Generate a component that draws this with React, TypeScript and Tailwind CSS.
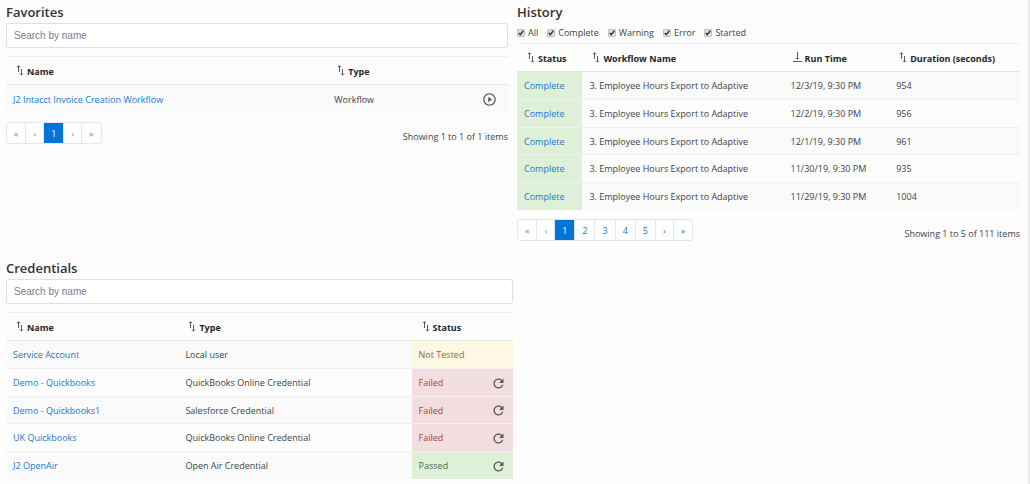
import { ReactNode, useState } from "react";
import clsx from "clsx";
import { MdPlayCircleOutline, MdRefresh } from "react-icons/md";

type HistoryItem = {
  workflow: string;
  runTime: string;
  duration: number;
};

type CredentialStatus = "Not Tested" | "Failed" | "Passed";

type Credential = {
  name: string;
  type: string;
  status: CredentialStatus;
};

const filters = ["All", "Complete", "Warning", "Error", "Started"];

const historyItems: HistoryItem[] = [
  { workflow: "3. Employee Hours Export to Adaptive", runTime: "12/3/19, 9:30 PM", duration: 954 },
  { workflow: "3. Employee Hours Export to Adaptive", runTime: "12/2/19, 9:30 PM", duration: 956 },
  { workflow: "3. Employee Hours Export to Adaptive", runTime: "12/1/19, 9:30 PM", duration: 961 },
  { workflow: "3. Employee Hours Export to Adaptive", runTime: "11/30/19, 9:30 PM", duration: 935 },
  { workflow: "3. Employee Hours Export to Adaptive", runTime: "11/29/19, 9:30 PM", duration: 1004 },
];

const credentials: Credential[] = [
  { name: "Service Account", type: "Local user", status: "Not Tested" },
  { name: "Demo - Quickbooks", type: "QuickBooks Online Credential", status: "Failed" },
  { name: "Demo - Quickbooks1", type: "Salesforce Credential", status: "Failed" },
  { name: "UK Quickbooks", type: "QuickBooks Online Credential", status: "Failed" },
  { name: "J2 OpenAir", type: "Open Air Credential", status: "Passed" },
];

const statusStyles: Record<CredentialStatus, string> = {
  "Not Tested": "bg-[#fcf8e3] text-[#8a6d3b]",
  Failed: "bg-[#f2dede] text-[#a94442]",
  Passed: "bg-[#dff0d8] text-[#47704a]",
};

export default function App() {
  return (
    <main className="grid min-h-screen grid-cols-[507fr_503fr] gap-x-1 border-r-2 border-[#ececec] bg-[#fdfdfd] pr-2 pl-[6px] font-['Open_Sans','Noto_Sans',sans-serif] text-[9px] leading-[14px] text-[#404346]">
      <div>
        <Favorites />
        <Credentials />
      </div>
      <History />
    </main>
  );
}

function Favorites() {
  return (
    <section className="h-64 pr-[5px]">
      <Heading>Favorites</Heading>
      <SearchInput label="Search favorites" />
      <Table className="mt-2">
        <colgroup>
          <col className="w-[64%]" />
          <col className="w-[29%]" />
          <col />
        </colgroup>
        <thead>
          <HeadRow>
            <HeadCell>Name</HeadCell>
            <HeadCell>Type</HeadCell>
            <td></td>
          </HeadRow>
        </thead>
        <tbody>
          <Row>
            <Cell>
              <Link>J2 Intacct Invoice Creation Workflow</Link>
            </Cell>
            <Cell>Workflow</Cell>
            <Cell>
              <button type="button" aria-label="Run workflow" className="ml-auto mr-1 block text-[#55595c]">
                <MdPlayCircleOutline className="size-[15px]" />
              </button>
            </Cell>
          </Row>
        </tbody>
      </Table>
      <Footer pages={[1]} summary="Showing 1 to 1 of 1 items" />
    </section>
  );
}

function Credentials() {
  return (
    <section>
      <Heading>Credentials</Heading>
      <SearchInput label="Search credentials" />
      <Table className="mt-2">
        <colgroup>
          <col className="w-[34%]" />
          <col className="w-[46%]" />
          <col />
        </colgroup>
        <thead>
          <HeadRow>
            <HeadCell>Name</HeadCell>
            <HeadCell>Type</HeadCell>
            <HeadCell>Status</HeadCell>
          </HeadRow>
        </thead>
        <tbody>
          {credentials.map((credential) => (
            <Row key={credential.name}>
              <Cell>
                <Link>{credential.name}</Link>
              </Cell>
              <Cell>{credential.type}</Cell>
              <Cell className={statusStyles[credential.status]}>
                <div className="flex items-center justify-between">
                  {credential.status}
                  {credential.status !== "Not Tested" && (
                    <button type="button" aria-label={`Retest ${credential.name}`} className="text-[#55595c]">
                      <MdRefresh className="size-[15px]" />
                    </button>
                  )}
                </div>
              </Cell>
            </Row>
          ))}
        </tbody>
      </Table>
    </section>
  );
}

function History() {
  return (
    <section>
      <Heading>History</Heading>
      <div className="flex h-[20px] items-center gap-[9px] pb-px">
        {filters.map((filter) => (
          <Filter key={filter} label={filter} />
        ))}
      </div>
      <Table>
        <colgroup>
          <col className="w-[13%]" />
          <col className="w-[40%]" />
          <col className="w-[21%]" />
          <col />
        </colgroup>
        <thead>
          <HeadRow>
            <HeadCell>Status</HeadCell>
            <HeadCell>Workflow Name</HeadCell>
            <HeadCell sorted>Run Time</HeadCell>
            <HeadCell>Duration (seconds)</HeadCell>
          </HeadRow>
        </thead>
        <tbody>
          {historyItems.map((item) => (
            <Row key={item.runTime}>
              <Cell className="bg-[#dff0d8]">
                <Link>Complete</Link>
              </Cell>
              <Cell>{item.workflow}</Cell>
              <Cell>{item.runTime}</Cell>
              <Cell>{item.duration}</Cell>
            </Row>
          ))}
        </tbody>
      </Table>
      <Footer pages={[1, 2, 3, 4, 5]} summary="Showing 1 to 5 of 111 items" />
    </section>
  );
}

function Heading({ children }: { children: ReactNode }) {
  return <h2 className="h-[23px] text-[13px] leading-6 font-semibold text-[#303336]">{children}</h2>;
}

function SearchInput({ label }: { label: string }) {
  return (
    <input
      type="text"
      aria-label={label}
      placeholder="Search by name"
      className="block h-[25px] w-full rounded-[3px] border border-[#dfdfdf] bg-white px-[7px] font-['Liberation_Sans',sans-serif] text-[10px] placeholder:text-[#7b8085]"
    />
  );
}

function Filter({ label }: { label: string }) {
  const [checked, setChecked] = useState(true);

  return (
    <label className="flex items-center gap-[3px]">
      <span className="grid size-[8px] place-items-center">
        <input
          type="checkbox"
          checked={checked}
          onChange={(e) => setChecked(e.target.checked)}
          className="col-start-1 row-start-1 size-[8px] appearance-none rounded-[1px] border border-[#c0c0c0] bg-[#dedede]"
        />
        {checked && (
          <svg viewBox="0 0 8 8" className="pointer-events-none z-10 col-start-1 row-start-1 size-[8px]" aria-hidden="true">
            <path d="M1.8 4l1.5 1.7L6.3 1.8" fill="none" stroke="#333" strokeWidth="1.4" />
          </svg>
        )}
      </span>
      {label}
    </label>
  );
}

function Table({ className, children }: { className?: string; children: ReactNode }) {
  return <table className={clsx("w-full table-fixed border-separate border-spacing-0", className)}>{children}</table>;
}

function HeadRow({ children }: { children: ReactNode }) {
  return <tr className="h-[29px] *:border-t *:border-b *:border-t-[#efefef] *:border-b-[#e6e6e6]">{children}</tr>;
}

function HeadCell({ sorted = false, children }: { sorted?: boolean; children: ReactNode }) {
  return (
    <th scope="col" className="p-0 pl-[9px] text-left font-bold text-[#24272a]">
      <button type="button" className="flex items-center gap-[3px] pt-px leading-[15px] whitespace-nowrap">
        {sorted ? <SortedIcon /> : <SortIcon />}
        {children}
      </button>
    </th>
  );
}

function Row({ children }: { children: ReactNode }) {
  return (
    <tr className="h-[28px] odd:bg-[#fafafa] nth-[2n+3]:h-[27px] *:border-b *:border-[#f0f0f0] last:*:border-b-0">
      {children}
    </tr>
  );
}

function Cell({ className, children }: { className?: string; children: ReactNode }) {
  return <td className={clsx("px-[7px] pt-px pb-0 whitespace-nowrap", className)}>{children}</td>;
}

function Link({ children }: { children: ReactNode }) {
  return (
    <a href="#" className="text-[#1c79cf]">
      {children}
    </a>
  );
}

function Footer({ pages, summary }: { pages: number[]; summary: string }) {
  const isOnlyPage = pages.length === 1;

  return (
    <div className="mt-[9px] flex items-end justify-between">
      <nav
        aria-label="Pagination"
        className="flex h-[22px] divide-x divide-[#e6e6e6] overflow-hidden rounded-[3px] border border-[#e6e6e6] bg-white"
      >
        <PageButton label="First page" disabled>«</PageButton>
        <PageButton label="Previous page" disabled>‹</PageButton>
        {pages.map((page) => (
          <PageButton key={page} label={`Page ${page}`} active={page === 1}>
            {page}
          </PageButton>
        ))}
        <PageButton label="Next page" disabled={isOnlyPage}>›</PageButton>
        <PageButton label="Last page" disabled={isOnlyPage}>»</PageButton>
      </nav>
      <span>{summary}</span>
    </div>
  );
}

type PageButtonProps = {
  label: string;
  active?: boolean;
  disabled?: boolean;
  children: ReactNode;
};

function PageButton({ label, active = false, disabled = false, children }: PageButtonProps) {
  return (
    <button
      type="button"
      aria-label={label}
      aria-current={active ? "page" : undefined}
      disabled={disabled}
      className={clsx(
        "px-[7px] pt-px",
        active && "bg-[#0275d8] text-white",
        disabled && "text-[#818a91]",
        !active && !disabled && "text-[#1c79cf]"
      )}
    >
      {children}
    </button>
  );
}

function SortIcon() {
  return (
    <svg viewBox="0 0 9 12" className="h-[12px] w-[9px]" fill="none" stroke="#55595c" aria-hidden="true">
      <path d="M3.5 7V.8M2 2.2L3.5.7 5 2.2M6.5 4v6M5 8.6l1.5 1.5L8 8.6" />
    </svg>
  );
}

function SortedIcon() {
  return (
    <svg viewBox="0 0 9 12" className="h-[12px] w-[9px]" fill="none" stroke="#55595c" aria-hidden="true">
      <path d="M4.5 0v7.2M3 5.8l1.5 1.5L6 5.8M0 9.5h9" />
    </svg>
  );
}
